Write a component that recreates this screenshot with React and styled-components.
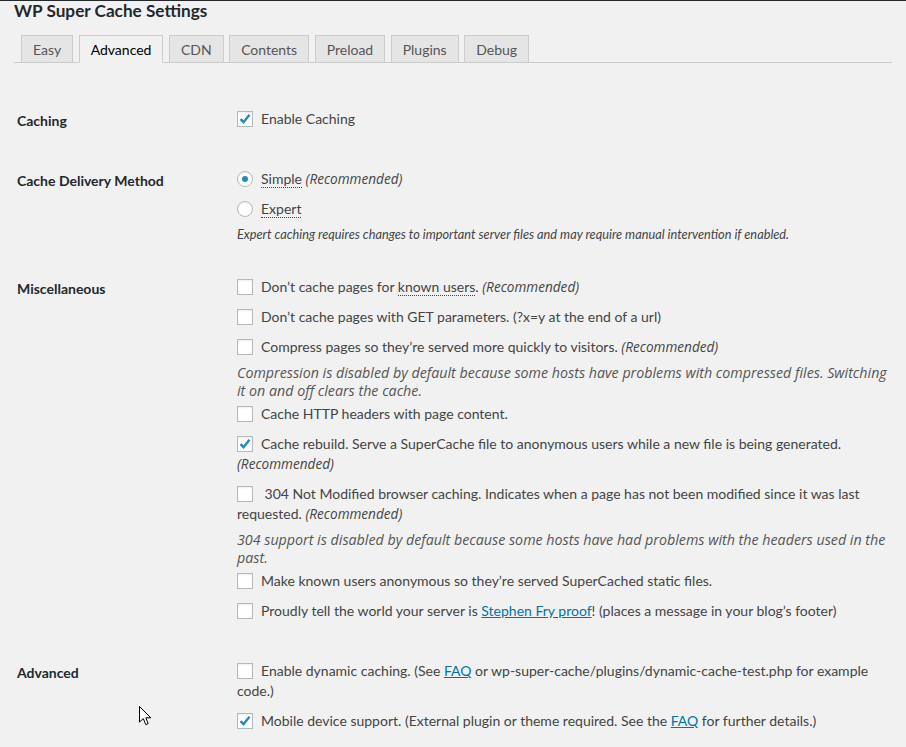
import React from "react";
import styled, { createGlobalStyle, css } from "styled-components";

const GlobalStyle = createGlobalStyle`
  html, body {
    margin: 0;
    background: #f1f1f1;
  }
  body {
    font-family: Lato, "Noto Sans", "Liberation Sans", sans-serif;
    color: #444;
    -webkit-font-smoothing: antialiased;
  }
`;

const italicFont = `"Open Sans", "Noto Sans", Lato, sans-serif`;

const Page = styled.div`
  position: relative;
  min-height: 746px;
  border-top: 1px solid #23282d;
  padding: 0 16px 0 14px;
  box-sizing: border-box;
`;

const Title = styled.h2`
  margin: 0;
  font-size: 17.2px;
  line-height: 20px;
  font-weight: 700;
  color: #23282d;
`;

const TabBar = styled.nav`
  display: flex;
  align-items: flex-end;
  gap: 5.5px;
  margin: 14px -2px 0 0;
  padding-left: 7px;
  border-bottom: 1px solid #ccc;
`;

const Tab = styled.a`
  display: block;
  margin-bottom: -1px;
  padding: 1px 11px 0;
  line-height: 25px;
  font-size: 14px;
  color: #555;
  text-decoration: none;
  background: #e5e5e5;
  border: 1px solid #ccc;
  ${(p) =>
    p.$active &&
    css`
      background: #f1f1f1;
      color: #000;
      border-bottom-color: #f1f1f1;
    `}
`;

const Form = styled.div`
  margin-top: 26px;
`;

const Section = styled.div`
  display: grid;
  grid-template-columns: 223px 1fr;
  padding: 15px 0;
`;

const Heading = styled.div`
  padding: 7px 0 0 3px;
  font-size: 14px;
  line-height: 20px;
  font-weight: 700;
  color: #23282d;
`;

const Options = styled.div`
  min-width: 0;
`;

const Option = styled.label`
  display: block;
  padding: 5px 0;
  font-size: 14px;
  line-height: 20px;
  color: #444;
`;

const Box = styled.span`
  display: inline-block;
  box-sizing: border-box;
  width: 16px;
  height: 16px;
  margin-right: 8px;
  vertical-align: -3px;
  background: #fff;
  border: 1px solid #b4b9be;
  box-shadow: inset 0 1px 2px rgba(0, 0, 0, 0.07);
  border-radius: ${(p) => (p.$round ? "50%" : "0")};
  position: relative;
`;

const Dot = styled.span`
  position: absolute;
  left: 4px;
  top: 4px;
  width: 6px;
  height: 6px;
  border-radius: 50%;
  background: #1e8cbe;
`;

const Em = styled.em`
  font-family: ${italicFont};
  font-style: italic;
  font-size: 13.6px;
`;

const Dotted = styled.span`
  border-bottom: 1px dotted #444;
`;

const Link = styled.a`
  color: #0073aa;
  text-decoration: underline;
`;

const Desc = styled.p`
  margin: ${(p) => (p.$small ? "3px 0 0" : "2px 0 0")};
  font-family: ${(p) => (p.$small ? "Lato, sans-serif" : italicFont)};
  font-size: ${(p) => (p.$small ? "12.75px" : "14.25px")};
  line-height: ${(p) => (p.$small ? "15px" : "17.5px")};
  font-style: italic;
  color: ${(p) => (p.$small ? "#444" : "#555")};
`;

const Cursor = styled.svg`
  position: absolute;
  left: 139px;
  top: 705px;
`;

const Check = ({ on }) => (
  <Box>
    {on && (
      <svg width="14" height="14" viewBox="0 0 14 14" style={{ position: "absolute", left: 0, top: 0 }}>
        <path d="M2.5 7.2 L5.5 10.2 L11.5 2.8" fill="none" stroke="#1e8cbe" strokeWidth="2.4" />
      </svg>
    )}
  </Box>
);

const Radio = ({ on }) => <Box $round>{on && <Dot />}</Box>;

const tabs = ["Easy", "Advanced", "CDN", "Contents", "Preload", "Plugins", "Debug"];

export default function App() {
  return (
    <>
      <GlobalStyle />
      <Page>
        <Title>WP Super Cache Settings</Title>
        <TabBar>
          {tabs.map((t) => (
            <Tab key={t} $active={t === "Advanced"}>
              {t}
            </Tab>
          ))}
        </TabBar>

        <Form>
          <Section>
            <Heading>Caching</Heading>
            <Options>
              <Option>
                <Check on />
                Enable Caching
              </Option>
            </Options>
          </Section>

          <Section>
            <Heading>Cache Delivery Method</Heading>
            <Options>
              <Option>
                <Radio on />
                <Dotted>Simple</Dotted> <Em>(Recommended)</Em>
              </Option>
              <Option>
                <Radio />
                <Dotted>Expert</Dotted>
              </Option>
              <Desc $small>
                Expert caching requires changes to important server files and may require manual intervention if enabled.
              </Desc>
            </Options>
          </Section>

          <Section>
            <Heading>Miscellaneous</Heading>
            <Options>
              <Option>
                <Check />
                Don’t cache pages for <Dotted>known users</Dotted>. <Em>(Recommended)</Em>
              </Option>
              <Option>
                <Check />
                Don’t cache pages with GET parameters. (?x=y at the end of a url)
              </Option>
              <Option>
                <Check />
                Compress pages so they’re served more quickly to visitors. <Em>(Recommended)</Em>
              </Option>
              <Desc>
                Compression is disabled by default because some hosts have problems with compressed files. Switching it on and off clears the cache.
              </Desc>
              <Option>
                <Check />
                Cache HTTP headers with page content.
              </Option>
              <Option>
                <Check on />
                Cache rebuild. Serve a SuperCache file to anonymous users while a new file is being generated.{" "}
                <Em>(Recommended)</Em>
              </Option>
              <Option>
                <Check />
                {"\u00a0"}304 Not Modified browser caching. Indicates when a page has not been modified since it was last requested.{" "}
                <Em>(Recommended)</Em>
              </Option>
              <Desc>
                304 support is disabled by default because some hosts have had problems with the headers used in the past.
              </Desc>
              <Option>
                <Check />
                Make known users anonymous so they’re served SuperCached static files.
              </Option>
              <Option>
                <Check />
                Proudly tell the world your server is <Link>Stephen Fry proof</Link>! (places a message in your blog’s footer)
              </Option>
            </Options>
          </Section>

          <Section>
            <Heading>Advanced</Heading>
            <Options>
              <Option>
                <Check />
                Enable dynamic caching. (See <Link>FAQ</Link> or wp-super-cache/plugins/dynamic-cache-test.php for example code.)
              </Option>
              <Option>
                <Check on />
                Mobile device support. (External plugin or theme required. See the <Link>FAQ</Link> for further details.)
              </Option>
            </Options>
          </Section>
        </Form>

        <Cursor width="13" height="20" viewBox="0 0 13 20">
          <path d="M0.5 0.5 L0.5 16 L4.3 12.6 L6.8 18.6 L9.2 17.6 L6.8 11.8 L11.8 11.8 Z" fill="#fff" stroke="#000" strokeWidth="1" strokeLinejoin="round" />
        </Cursor>
      </Page>
    </>
  );
}
